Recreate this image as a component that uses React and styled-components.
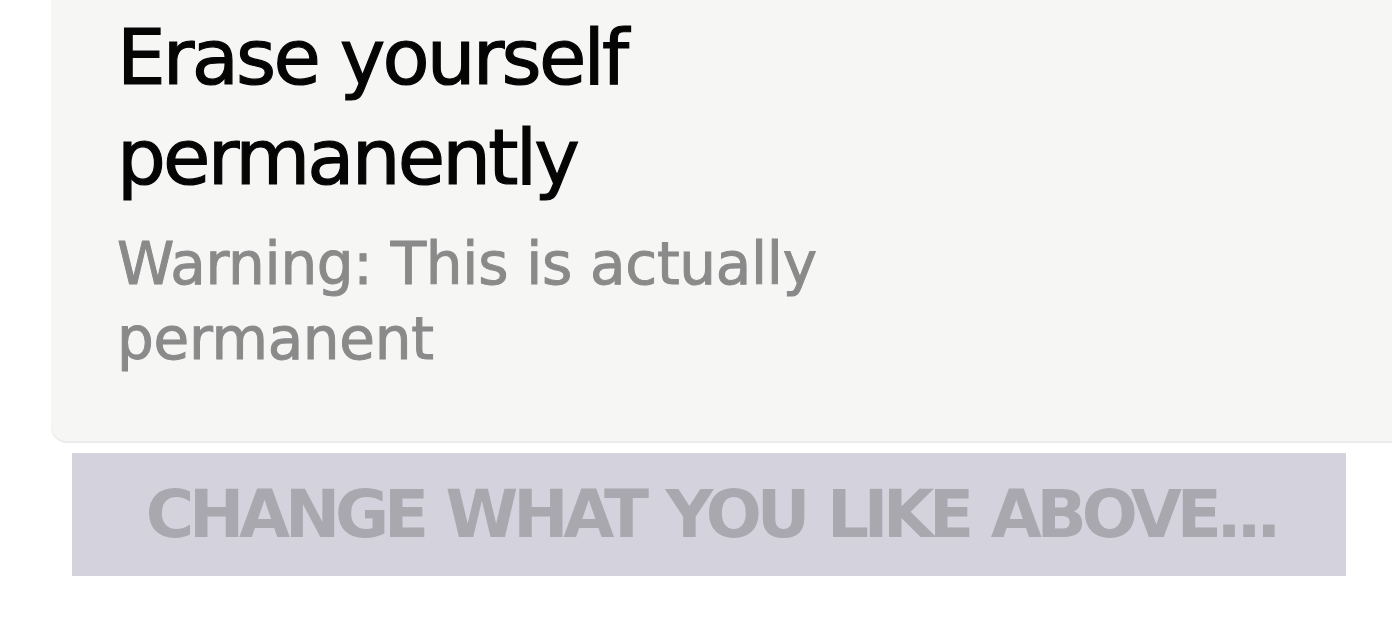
import React from "react";
import styled, { createGlobalStyle } from "styled-components";

const Global = createGlobalStyle`
  html, body {
    margin: 0;
    padding: 0;
    background: #ffffff;
    overflow: hidden;
  }
  body {
    font-family: "DejaVu Sans", "Liberation Sans", sans-serif;
  }
`;

const Page = styled.div`
  width: 1392px;
  height: 620px;
  overflow: hidden;
  padding-left: 51px;
  box-sizing: border-box;
`;

const Card = styled.section`
  width: 1400px;
  margin-top: -40px;
  padding: 48px 0 64px 66px;
  box-sizing: border-box;
  background: #f6f6f5;
  border-radius: 16px;
  box-shadow: 0 2px 0 #ebebea;
`;

const TextColumn = styled.div`
  width: 740px;
`;

const Title = styled.h2`
  margin: 0;
  font-size: 77px;
  line-height: 100px;
  font-weight: normal;
  color: #050505;
  letter-spacing: -2.8px;
  -webkit-text-stroke: 1.2px #050505;
`;

const Note = styled.p`
  margin: 19px 0 0;
  font-size: 58px;
  line-height: 75px;
  color: #8a8a8a;
  letter-spacing: -0.3px;
  -webkit-text-stroke: 1px #8a8a8a;
`;

const SubmitButton = styled.button`
  display: block;
  margin: 12px 0 0 21px;
  width: 1274px;
  height: 123px;
  padding: 0 0 0 4px;
  border: none;
  background: #d4d3dd;
  color: #a9a8ae;
  font-family: "DejaVu Sans", "Liberation Sans", sans-serif;
  font-weight: bold;
  font-size: 66px;
  line-height: 123px;
  text-align: center;
  letter-spacing: -5.2px;
  word-spacing: 4px;
  cursor: default;
`;

export default function App() {
  return (
    <>
      <Global />
      <Page>
        <Card>
          <TextColumn>
            <Title>Erase yourself permanently</Title>
            <Note>Warning: This is actually permanent</Note>
          </TextColumn>
        </Card>
        <SubmitButton disabled>CHANGE WHAT YOU LIKE ABOVE...</SubmitButton>
      </Page>
    </>
  );
}
